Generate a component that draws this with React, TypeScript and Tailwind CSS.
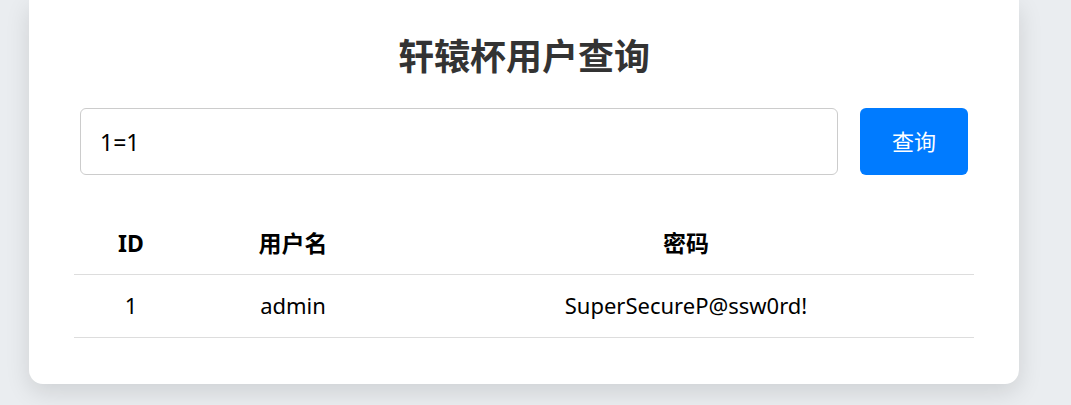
import React from "react";

type Row = {
  id: number;
  username: string;
  password: string;
};

const rows: Row[] = [{ id: 1, username: "admin", password: "SuperSecureP@ssw0rd!" }];

const font = "font-['Noto_Sans','Noto_Sans_CJK_SC',sans-serif]";

export default function App() {
  return (
    <div className={`min-h-screen bg-[#eaedf0] pb-[22px] ${font}`}>
      <div className="ml-[29px] w-[990px] bg-white rounded-b-[14px] shadow-[0_8px_24px_rgba(0,0,0,0.12)] pt-[35px] pb-[46px]">
        <h1 className="text-center text-[36px] leading-[44px] font-bold text-[#333]">轩辕杯用户查询</h1>

        <div className="flex gap-[22px] px-[51px] mt-[29px]">
          <input
            className="flex-1 h-[67px] border border-[#ccc] rounded-[6px] px-[19px] text-[23px] text-black outline-none"
            defaultValue="1=1"
          />
          <button className="w-[108px] h-[67px] rounded-[6px] bg-[#007bff] text-white text-[22px]">查询</button>
        </div>

        <table className="mx-[45px] mt-[37px] w-[900px] border-collapse">
          <thead>
            <tr className="border-b border-[#ddd]">
              <th className="w-[114px] h-[62px] text-[23px] font-bold text-black text-center">ID</th>
              <th className="w-[210px] h-[62px] text-[23px] font-bold text-black text-center">用户名</th>
              <th className="h-[62px] text-[23px] font-bold text-black text-center">密码</th>
            </tr>
          </thead>
          <tbody>
            {rows.map((r) => (
              <tr key={r.id} className="border-b border-[#ddd]">
                <td className="h-[63px] text-[22px] text-black text-center">{r.id}</td>
                <td className="h-[63px] text-[22px] text-black text-center">{r.username}</td>
                <td className="h-[63px] text-[22px] text-black text-center">{r.password}</td>
              </tr>
            ))}
          </tbody>
        </table>
      </div>
    </div>
  );
}
